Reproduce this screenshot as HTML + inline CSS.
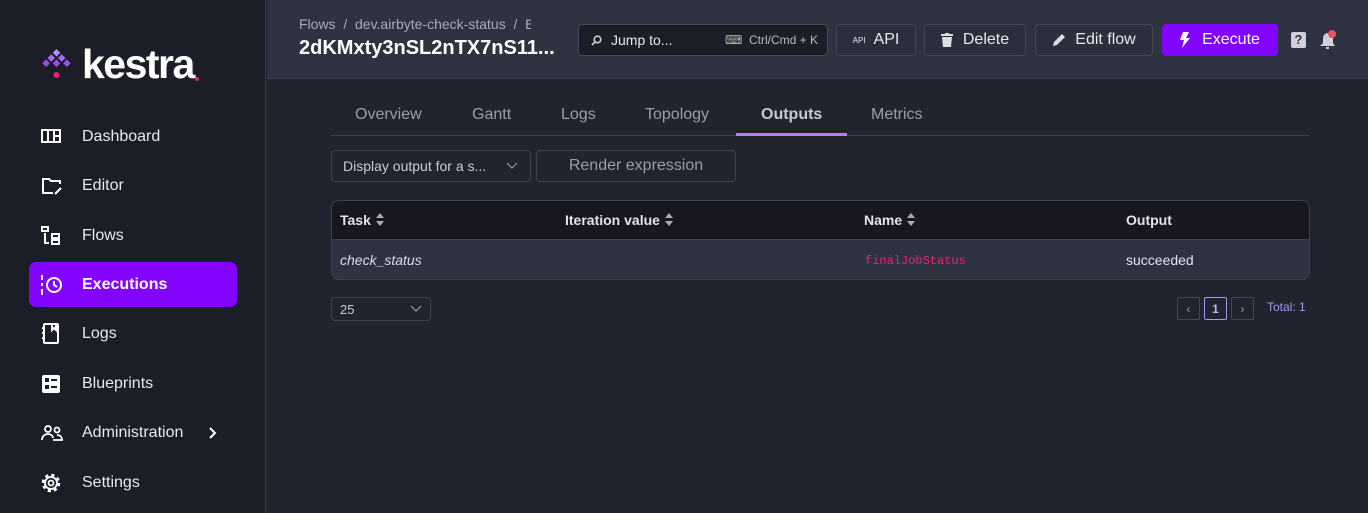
<!DOCTYPE html>
<html><head><meta charset="utf-8"><style>
*{box-sizing:border-box;margin:0;padding:0}
body{width:1368px;height:513px;overflow:hidden;background:#21242e;font-family:"Liberation Sans",sans-serif;color:#fff;position:relative}
.side{position:absolute;left:0;top:0;width:266px;height:513px;background:#1c1e27;border-right:1px solid #363a48}
.logo{position:absolute;left:42px;top:44px;display:flex;align-items:center}
.logo span{font-size:41px;font-weight:bold;letter-spacing:-1.5px;margin-left:10px;line-height:40px}
.nav{position:absolute;left:29px;width:208px;height:45px;border-radius:7px;display:flex;align-items:center;font-size:16px;color:#e8e8ee}
.nav svg{position:absolute;left:12px}
.nav b,.nav .t{position:absolute;left:53px}
.nav.act{background:#8405ff;color:#fff;font-weight:bold}
.hdr{position:absolute;left:267px;top:0;right:0;height:79px;background:#2f3241;border-bottom:1px solid #3c4050}
.crumb{position:absolute;left:32px;top:16px;font-size:14px;color:#a9abb8;width:232px;overflow:hidden;white-space:nowrap}
.title{position:absolute;left:32px;top:37px;font-size:20px;font-weight:bold;color:#fff}
.btn{position:absolute;top:24px;height:32px;border:1px solid #444857;border-radius:4px;background:#2b2e3c;display:flex;align-items:center;justify-content:center;font-size:16px;color:#e8e8ee}
.tabs{position:absolute;left:331px;top:96px;width:978px;height:40px;border-bottom:1px solid #3c4050}
.tab{position:absolute;top:10px;font-size:16px;color:#9a9cab}
.sel{position:absolute;height:32px;border:1px solid #3c4050;border-radius:4px;background:#21242e;font-size:14px;color:#c9cad4;display:flex;align-items:center}
.tbl{position:absolute;left:331px;top:200px;width:979px;height:80px;border:1px solid #3c4050;border-radius:8px;overflow:hidden;background:#2f3241}
.th{height:39px;background:#17181f;border-bottom:1px solid #3c4050;position:relative}
.th div{position:absolute;top:11px;font-size:14px;font-weight:bold;color:#e2e2ea}
.th svg{vertical-align:-1px;margin-left:4px}
.td{position:absolute;top:52px;font-size:14px}
.pg{position:absolute;top:297px;width:23px;height:23px;border:1px solid #444857;border-radius:2px;display:flex;align-items:center;justify-content:center;font-size:12px;color:#9a9cab}
</style></head><body>
<div class="side">
 <div class="logo">
  <svg width="30" height="34" viewBox="0 0 30 34"><polygon points="14.5,2 18.3,5.8 14.5,9.6 10.7,5.8" fill="#b48ef7"/><polygon points="9.3,7.2 13.1,11 9.3,14.8 5.5,11" fill="#a66cf2"/><polygon points="19.7,7.2 23.5,11 19.7,14.8 15.9,11" fill="#a66cf2"/><polygon points="4.1,12.4 7.9,16.2 4.1,20 0.3,16.2" fill="#9a4cf0"/><polygon points="14.5,12.4 18.3,16.2 14.5,20 10.7,16.2" fill="#9a4cf0"/><polygon points="24.9,12.4 28.7,16.2 24.9,20 21.1,16.2" fill="#9a4cf0"/><circle cx="14.5" cy="28" r="3" fill="#e9236d"/></svg>
  <span>kestra</span><i style="width:4px;height:4px;background:#e9236d;border-radius:2px;margin-top:30px;margin-left:1px"></i>
 </div>
 <div class="nav" style="top:114px"><svg width="20" height="16" viewBox="0 0 20 16" fill="none" stroke="#fff" stroke-width="2"><rect x="1" y="1" width="18" height="12"/><path d="M7 1v12M13 1v12M13 7h6"/></svg><span class="t">Dashboard</span></div>
 <div class="nav" style="top:163px"><svg width="22" height="18" viewBox="0 0 22 18" fill="none" stroke="#fff" stroke-width="2"><path d="M12 16H2V2h6l2 2h9v3"/><path d="M14 17l6-6"/></svg><span class="t">Editor</span></div>
 <div class="nav" style="top:213px"><svg width="20" height="20" viewBox="0 0 20 20" fill="none" stroke="#fff" stroke-width="2"><rect x="1" y="1" width="6" height="4"/><path d="M4 7v10h4"/><rect x="11" y="8" width="7" height="4"/><rect x="11" y="14" width="7" height="4"/></svg><span class="t">Flows</span></div>
 <div class="nav act" style="top:262px"><svg width="22" height="20" viewBox="0 0 22 20" fill="none" stroke="#fff" stroke-width="2"><path d="M1 0v5M1 8v3M1 14v6"/><circle cx="13" cy="10" r="7"/><path d="M13 6v4l3 2"/></svg><b>Executions</b></div>
 <div class="nav" style="top:311px"><svg width="20" height="22" viewBox="0 0 20 22" fill="none" stroke="#fff" stroke-width="2"><rect x="3" y="1" width="14" height="19" rx="1"/><path d="M1 5h3M1 10h3M1 15h3M11 1v6l2-2 2 2V1"/></svg><span class="t">Logs</span></div>
 <div class="nav" style="top:361px"><svg width="20" height="20" viewBox="0 0 20 20"><rect x="1" y="1" width="18" height="18" rx="2" fill="#fff"/><g fill="#1c1e27"><rect x="4" y="4" width="4" height="4"/><rect x="4" y="11" width="4" height="4"/><rect x="10" y="5" width="6" height="2"/><rect x="10" y="12" width="6" height="2"/></g></svg><span class="t">Blueprints</span></div>
 <div class="nav" style="top:410px"><svg width="22" height="16" viewBox="0 0 22 16" fill="none" stroke="#fff" stroke-width="1.8"><circle cx="7" cy="4" r="3"/><circle cx="16" cy="5" r="2.5"/><path d="M1 15c0-4 3-6 6-6s5 2 5 4M12 15h9c0-3-2-5-5-5"/></svg><span class="t">Administration</span><svg style="left:178px" width="10" height="14" viewBox="0 0 10 14" fill="none" stroke="#fff" stroke-width="2"><path d="M3 2l5 5-5 5"/></svg></div>
 <div class="nav" style="top:460px"><svg width="20" height="20" viewBox="0 0 20 20" fill="none" stroke="#fff"><circle cx="10" cy="10" r="7.5" stroke-width="3.5" stroke-dasharray="3 2.9"/><circle cx="10" cy="10" r="6" stroke-width="1.8" fill="#1c1e27"/><circle cx="10" cy="10" r="2.5" stroke-width="1.8"/></svg><span class="t">Settings</span></div>
</div>
<div class="hdr">
 <div class="crumb">Flows &nbsp;/ &nbsp;dev.airbyte-check-status &nbsp;/ &nbsp;Executions</div>
 <div class="title">2dKMxty3nSL2nTX7nS11...</div>
 <div class="btn" style="left:311px;width:250px;background:#1c1e27;justify-content:flex-start;font-size:14px"><svg style="margin-left:12px" width="11" height="11" viewBox="0 0 11 11" fill="none" stroke="#ccc" stroke-width="1.6"><circle cx="6.5" cy="4.5" r="3.3"/><path d="M4 7l-3 3"/></svg><span style="margin-left:9px">Jump to...</span><span style="position:absolute;left:146px;font-size:12px;color:#bbb">&#9000;&nbsp; Ctrl/Cmd + K</span></div>
 <div class="btn" style="left:569px;width:80px"><span style="font-size:8px;margin-right:8px">API</span>API</div>
 <div class="btn" style="left:657px;width:102px"><svg width="12" height="14" viewBox="0 0 12 14" style="margin-right:10px"><path d="M0 1h12v2H0zM4 0h4v1H4zM1 4h10l-1 10H2z" fill="#ddd"/></svg>Delete</div>
 <div class="btn" style="left:768px;width:118px"><svg width="14" height="14" viewBox="0 0 14 14" style="margin-right:9px"><path d="M1 13l1-4 8-8 3 3-8 8z" fill="#ddd"/></svg>Edit flow</div>
 <div class="btn" style="left:895px;width:116px;background:#8405ff;border-color:#8405ff;color:#fff"><svg width="10" height="16" viewBox="0 0 10 16" style="margin-right:12px"><path d="M3 0h6L6 6h4L2 16l2-8H0z" fill="#fff"/></svg>Execute</div>
 <div style="position:absolute;left:1024px;top:32px;width:15px;height:16px;background:#d0d0dc;border-radius:2px;color:#2f3241;font-size:13px;font-weight:bold;text-align:center;line-height:16px">?</div>
 <svg style="position:absolute;left:1051px;top:29px" width="22" height="22" viewBox="0 0 22 22"><path d="M2 17h15l-2-3V9a5 5 0 0 0-10 0v5z" fill="#d0d0dc"/><rect x="8" y="18" width="3" height="2" fill="#d0d0dc"/><circle cx="14" cy="5" r="4" fill="#e8565e"/></svg>
</div>
<div class="tabs">
 <div class="tab" style="left:24px">Overview</div>
 <div class="tab" style="left:141px">Gantt</div>
 <div class="tab" style="left:230px">Logs</div>
 <div class="tab" style="left:314px">Topology</div>
 <div class="tab" style="left:430px;color:#c6c7d4;font-weight:bold">Outputs</div>
 <div style="position:absolute;left:405px;top:37px;width:111px;height:3px;background:#b77ff0"></div>
 <div class="tab" style="left:540px">Metrics</div>
</div>
<div class="sel" style="left:331px;top:150px;width:200px"><span style="margin-left:11px">Display output for a s...</span><svg style="position:absolute;left:174px" width="12" height="8" viewBox="0 0 12 8" fill="none" stroke="#999" stroke-width="1.2"><path d="M1 1l5 5 5-5"/></svg></div>
<div class="sel" style="left:536px;top:150px;width:200px;justify-content:center;font-size:16px;color:#9a9cab">Render expression</div>
<div class="tbl">
 <div class="th"><div style="left:8px">Task<svg width="10" height="13" viewBox="0 0 10 13"><path d="M5 0l4 5H1zM5 13l4-5H1z" fill="#a9abb8"/></svg></div><div style="left:233px">Iteration value<svg width="10" height="13" viewBox="0 0 10 13"><path d="M5 0l4 5H1zM5 13l4-5H1z" fill="#a9abb8"/></svg></div><div style="left:532px">Name<svg width="10" height="13" viewBox="0 0 10 13"><path d="M5 0l4 5H1zM5 13l4-5H1z" fill="#a9abb8"/></svg></div><div style="left:794px">Output</div></div>
 <div class="td" style="left:8px;top:51px;font-style:italic;color:#dcdce4">check_status</div>
 <div class="td" style="left:533px;top:53px;font-family:'Liberation Mono',monospace;font-size:12px;color:#e9236d">finalJobStatus</div>
 <div class="td" style="left:794px;top:51px;color:#e2e2ea">succeeded</div>
</div>
<div class="sel" style="left:331px;top:297px;width:100px;height:24px"><span style="margin-left:8px;font-size:13px">25</span><svg style="position:absolute;left:78px" width="12" height="8" viewBox="0 0 12 8" fill="none" stroke="#999" stroke-width="1.2"><path d="M1 1l5 5 5-5"/></svg></div>
<div class="pg" style="left:1177px">&lsaquo;</div>
<div class="pg" style="left:1204px;border-color:#9e9cf0;color:#b5b3ff;font-weight:bold">1</div>
<div class="pg" style="left:1231px">&rsaquo;</div>
<div style="position:absolute;left:1267px;top:300px;font-size:12px;color:#9e9cf0">Total: 1</div>
</body></html>
